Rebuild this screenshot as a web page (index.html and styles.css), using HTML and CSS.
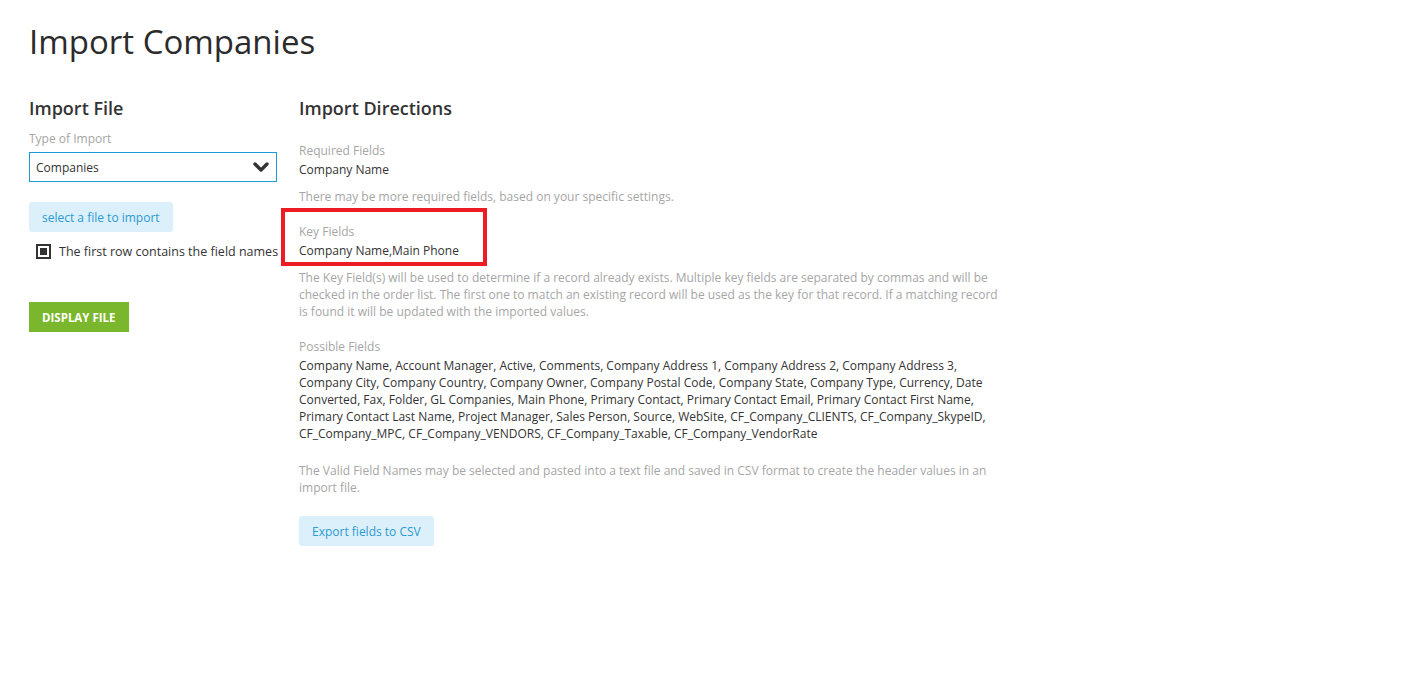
FILE: index.html
```html
<!DOCTYPE html>
<html lang="en">
  <head>
    <meta charset="UTF-8" />
    <title>Import Companies</title>
    <link rel="stylesheet" href="styles.css">
  </head>
  <body>
    <div class="page">
      <h1>Import Companies</h1>

      <div class="columns">
        <div class="import-file">
          <h2>Import File</h2>
          <label class="label">Type of Import</label>
          <div class="select">
            <span>Companies</span>
            <svg class="chevron" width="16" height="12" viewBox="0 0 16 12">
              <path d="M2 3 L8 9 L14 3" fill="none" stroke="#333" stroke-width="3.4" stroke-linecap="round" stroke-linejoin="round"/>
            </svg>
          </div>
          <button class="btn-light">select a file to import</button>
          <div class="check-row">
            <span class="checkbox"><span class="checkbox-mark"></span></span>
            <span>The first row contains the field names</span>
          </div>
          <button class="btn-green">DISPLAY FILE</button>
        </div>

        <div class="directions">
          <h2>Import Directions</h2>

          <div class="block">
            <div class="label">Required Fields</div>
            <div class="value">Company Name</div>
            <div class="note">There may be more required fields, based on your specific settings.</div>
          </div>

          <div class="block">
            <div class="key-fields">
              <div class="label">Key Fields</div>
              <div class="value">Company Name,Main Phone</div>
            </div>
            <div class="note">The Key Field(s) will be used to determine if a record already exists. Multiple key fields are separated by commas and will be checked in the order list. The first one to match an existing record will be used as the key for that record. If a matching record is found it will be updated with the imported values.</div>
          </div>

          <div class="block">
            <div class="label">Possible Fields</div>
            <div class="value">Company Name, Account Manager, Active, Comments, Company Address 1, Company Address 2, Company Address 3, Company City, Company Country, Company Owner, Company Postal Code, Company State, Company Type, Currency, Date Converted, Fax, Folder, GL Companies, Main Phone, Primary Contact, Primary Contact Email, Primary Contact First Name, Primary Contact Last Name, Project Manager, Sales Person, Source, WebSite, CF_Company_CLIENTS, CF_Company_SkypeID, CF_Company_MPC, CF_Company_VENDORS, CF_Company_Taxable, CF_Company_VendorRate</div>
            <div class="note note-wide">The Valid Field Names may be selected and pasted into a text file and saved in CSV format to create the header values in an import file.</div>
          </div>

          <button class="btn-light btn-export">Export fields to CSV</button>
        </div>
      </div>
    </div>
  </body>
</html>
```

FILE: styles.css
```css
body {
  margin: 0;
  font-family: "Open Sans", "Liberation Sans", sans-serif;
  font-size: 12px;
  line-height: 17px;
  color: #333;
  background: #fff;
}

.page {
  padding: 22px 29px;
}

h1 {
  margin: 0;
  font-size: 33px;
  line-height: 40px;
  font-weight: 400;
  color: #2b2b2b;
}

h2 {
  margin: 0;
  font-size: 18px;
  line-height: 24px;
  font-weight: 600;
  color: #333;
}

.columns {
  display: flex;
  gap: 22px;
  margin-top: 34px;
}

.import-file {
  width: 248px;
  display: flex;
  flex-direction: column;
  align-items: flex-start;
}

.label {
  display: block;
  color: #a6a6a6;
}

.import-file .label {
  margin-top: 10px;
}

.select {
  box-sizing: border-box;
  width: 248px;
  height: 30px;
  margin-top: 5px;
  padding: 0 6px;
  border: 1px solid #1e9ad6;
  display: flex;
  align-items: center;
  justify-content: space-between;
}

.chevron {
  margin-right: 1px;
}

.btn-light {
  height: 30px;
  padding: 0 13px;
  border: none;
  border-radius: 3px;
  background: #dcf0fb;
  color: #2b9ad3;
  font-family: inherit;
  font-size: 12px;
  cursor: pointer;
}

.import-file .btn-light {
  margin-top: 20px;
}

.check-row {
  display: flex;
  align-items: center;
  gap: 8px;
  margin-top: 11px;
  padding-left: 7px;
  font-size: 12.5px;
  white-space: nowrap;
}

.checkbox {
  box-sizing: border-box;
  width: 15px;
  height: 15px;
  border: 2px solid #333;
  display: flex;
  align-items: center;
  justify-content: center;
}

.checkbox-mark {
  width: 7px;
  height: 7px;
  background: #333;
}

.btn-green {
  margin-top: 42px;
  height: 30px;
  padding: 0 13px;
  border: none;
  background: #7ab72d;
  color: #fff;
  font-family: inherit;
  font-size: 11.5px;
  font-weight: 700;
  cursor: pointer;
}

.directions {
  width: 705px;
}

.block {
  margin-top: 22px;
}

.block + .block {
  margin-top: 18px;
}

.value {
  margin-top: 2px;
}

.note {
  margin-top: 10px;
  color: #a6a6a6;
}

.note-wide {
  margin-top: 20px;
}

.key-fields {
  position: relative;
}

.key-fields::after {
  content: "";
  position: absolute;
  left: -18px;
  top: -15px;
  width: 198px;
  height: 50px;
  border: 4px solid #ed1c24;
}

.btn-export {
  margin-top: 20px;
}
```
